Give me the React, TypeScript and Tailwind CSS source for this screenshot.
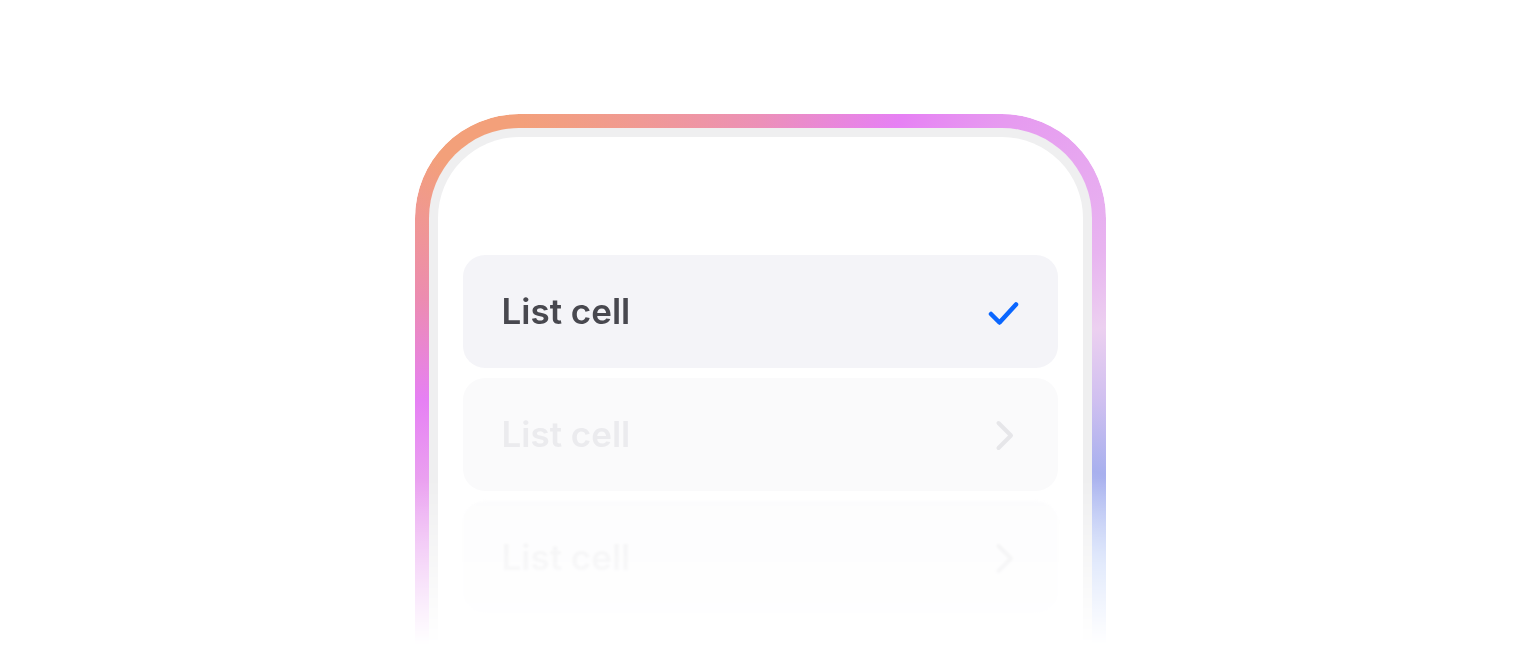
import React from 'react';

type CellProps = {
  selected?: boolean;
  faded?: 'light' | 'lighter';
};

function CheckIcon() {
  return (
    <svg width="32" height="28" viewBox="0 0 32 28" fill="none" className="overflow-visible">
      <path
        d="M3 16 L11.5 24.5 L28 6.5"
        stroke="#0a66ff"
        strokeWidth="4.5"
        strokeLinecap="round"
        strokeLinejoin="round"
      />
    </svg>
  );
}

function ChevronIcon({ color }: { color: string }) {
  return (
    <svg width="32" height="32" viewBox="0 0 32 32" fill="none" className="overflow-visible">
      <path
        d="M10.5 4 L23 16.5 L10.5 29"
        stroke={color}
        strokeWidth="4"
        strokeLinecap="round"
        strokeLinejoin="round"
      />
    </svg>
  );
}

function ListCell({ selected, faded }: CellProps) {
  if (selected) {
    return (
      <div className="h-[113px] rounded-[22px] bg-[#f4f4f8] flex items-center justify-between pl-[39px] pr-[38px]">
        <span className="text-[35px] font-semibold text-[#48484f]">List cell</span>
        <CheckIcon />
      </div>
    );
  }

  if (faded === 'light') {
    return (
      <div className="h-[113px] rounded-[22px] bg-[#fafafb] flex items-center justify-between pl-[39px] pr-[38px]">
        <span className="text-[35px] font-semibold text-[#ebebee]">List cell</span>
        <ChevronIcon color="#e6e6e9" />
      </div>
    );
  }

  return (
    <div className="h-[113px] rounded-[22px] bg-[#fcfcfd] flex items-center justify-between pl-[39px] pr-[38px] blur-[1px]">
      <span className="text-[35px] font-semibold text-[#efeff1]">List cell</span>
      <ChevronIcon color="#ededef" />
    </div>
  );
}

export default function App() {
  return (
    <div className="h-[650px] w-full bg-white overflow-hidden pt-[114px] font-['Inter','Noto_Sans',sans-serif]">
      {/* Phone frame with gradient rim, faded at the bottom */}
      <div className="mx-auto w-[691px] h-full rounded-t-[104px] px-[14px] pt-[14px] bg-[image:conic-gradient(from_0deg_at_50%_50%,#ec90b8_0deg,#e680f4_28deg,#e69af0_43deg,#e8b4f0_69deg,#ecd0f0_81deg,#d0c0f0_93deg,#a8b0ee_105deg,#c4d4f8_118deg,#dde6fb_150deg,#f0d8f8_210deg,#eaa0f0_254deg,#e680f4_267deg,#ec8cb0_284deg,#f3a07a_305deg,#f3a07a_317deg,#ec90b8_360deg)] [mask-image:linear-gradient(to_bottom,#000_68%,transparent_99%)] [-webkit-mask-image:linear-gradient(to_bottom,#000_68%,transparent_99%)]">
        <div className="h-full rounded-t-[90px] bg-[#efeff0] px-[9px] pt-[9px]">
          <div className="h-full rounded-t-[81px] bg-white px-[25px] pt-[118px]">
            <div className="flex flex-col gap-[10px]">
              <ListCell selected />
              <ListCell faded="light" />
              <ListCell faded="lighter" />
            </div>
          </div>
        </div>
      </div>
    </div>
  );
}
